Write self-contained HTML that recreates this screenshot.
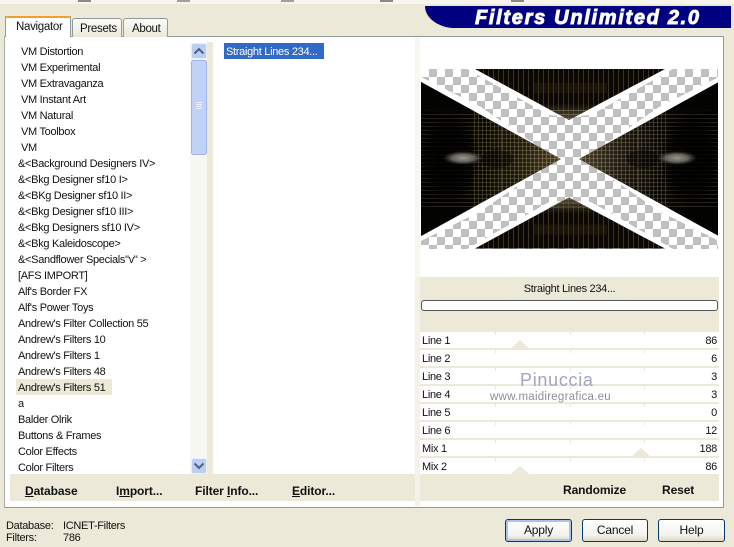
<!DOCTYPE html>
<html><head><meta charset="utf-8"><style>
html,body{margin:0;padding:0}
body{width:734px;height:547px;position:relative;overflow:hidden;background:#ece9d8;font-family:"Liberation Sans",sans-serif;font-size:11px;letter-spacing:-.3px;color:#111}
.a{position:absolute}
.t{position:absolute;white-space:nowrap;line-height:16px;height:16px;margin-top:1px}
.b{font-weight:bold;font-size:12px;letter-spacing:-.1px;margin-top:0}
.row{position:absolute;left:420px;width:299px;height:16px;background:#fff}
.row .l{position:absolute;left:2px;top:1px;line-height:16px}
.row .v{position:absolute;right:2px;top:1px;line-height:16px}
.row i{position:absolute;top:0;width:1px;height:3px;background:#e8e6da}
.btn{position:absolute;top:519px;height:21px;line-height:21px;text-align:center;border:1px solid #003c74;border-radius:3px;background:linear-gradient(#fff,#f4f3ee 70%,#dcd8c8);font-size:12px;letter-spacing:-.2px}
</style></head><body>
<div class="a" style="left:0;top:0;width:734px;height:4px;background:#f6f5ee"></div>
<div class="a" style="left:78px;top:0;width:13px;height:2px;background:#8a8a80"></div>
<div class="a" style="left:177px;top:0;width:13px;height:2px;background:#a0a098"></div>
<div class="a" style="left:281px;top:0;width:13px;height:2px;background:#a0a098"></div>
<div class="a" style="left:380px;top:0;width:13px;height:2px;background:#8a8a80"></div>
<div class="a" style="left:511px;top:0;width:13px;height:2px;background:#8a8a80"></div>

<!-- logo -->
<div class="a" style="left:425px;top:6px;width:306px;height:22px;background:#000080;border-bottom-left-radius:30px 22px"></div>
<div class="t" style="left:475px;top:7px;color:#fff;font:italic bold 20px/20px 'Liberation Sans',sans-serif;letter-spacing:1.7px;-webkit-text-stroke:.9px #fff;height:20px">Filters Unlimited 2.0</div>

<!-- panel -->
<div class="a" style="left:4px;top:36px;width:718px;height:470px;background:#fff;border:1px solid #919b9c;border-left-color:#a5aeae"></div>

<!-- tabs -->
<div class="a" style="left:72px;top:18px;width:48px;height:18px;background:linear-gradient(#fbfbf8,#ece9d8);border:1px solid #919b9c;border-bottom:0;border-radius:3px 3px 0 0"></div>
<div class="a" style="left:123px;top:18px;width:43px;height:18px;background:linear-gradient(#fbfbf8,#ece9d8);border:1px solid #919b9c;border-bottom:0;border-radius:3px 3px 0 0"></div>
<div class="a" style="left:5px;top:16px;width:66px;height:21px;background:#fff;border-left:1px solid #919b9c;border-right:1px solid #919b9c;box-sizing:border-box"></div>
<div class="a" style="left:5px;top:16px;width:66px;height:2px;background:#f0a030;border-radius:3px 3px 0 0"></div>
<div class="t" style="left:16px;top:18px;font-size:11.5px">Navigator</div>
<div class="t" style="left:80px;top:20px;font-size:11.5px">Presets</div>
<div class="t" style="left:132px;top:20px;font-size:11.5px">About</div>

<!-- list -->
<div class="a" style="left:16px;top:379px;width:96px;height:16px;background:#ece9d8"></div>
<div class="t" style="left:21px;top:43px">VM Distortion</div>
<div class="t" style="left:21px;top:59px">VM Experimental</div>
<div class="t" style="left:21px;top:75px">VM Extravaganza</div>
<div class="t" style="left:21px;top:91px">VM Instant Art</div>
<div class="t" style="left:21px;top:107px">VM Natural</div>
<div class="t" style="left:21px;top:123px">VM Toolbox</div>
<div class="t" style="left:21px;top:139px">VM</div>
<div class="t" style="left:18px;top:155px">&amp;&lt;Background Designers IV&gt;</div>
<div class="t" style="left:18px;top:171px">&amp;&lt;Bkg Designer sf10 I&gt;</div>
<div class="t" style="left:18px;top:187px">&amp;&lt;BKg Designer sf10 II&gt;</div>
<div class="t" style="left:18px;top:203px">&amp;&lt;Bkg Designer sf10 III&gt;</div>
<div class="t" style="left:18px;top:219px">&amp;&lt;Bkg Designers sf10 IV&gt;</div>
<div class="t" style="left:18px;top:235px">&amp;&lt;Bkg Kaleidoscope&gt;</div>
<div class="t" style="left:18px;top:251px">&amp;&lt;Sandflower Specials"v" &gt;</div>
<div class="t" style="left:18px;top:267px">[AFS IMPORT]</div>
<div class="t" style="left:18px;top:283px">Alf's Border FX</div>
<div class="t" style="left:18px;top:299px">Alf's Power Toys</div>
<div class="t" style="left:18px;top:315px">Andrew's Filter Collection 55</div>
<div class="t" style="left:18px;top:331px">Andrew's Filters 10</div>
<div class="t" style="left:18px;top:347px">Andrew's Filters 1</div>
<div class="t" style="left:18px;top:363px">Andrew's Filters 48</div>
<div class="t" style="left:18px;top:379px">Andrew's Filters 51</div>
<div class="t" style="left:18px;top:395px">a</div>
<div class="t" style="left:18px;top:411px">Balder Olrik</div>
<div class="t" style="left:18px;top:427px">Buttons &amp; Frames</div>
<div class="t" style="left:18px;top:443px">Color Effects</div>
<div class="t" style="left:18px;top:459px">Color Filters</div>

<!-- scrollbar -->
<div class="a" style="left:190px;top:42px;width:17px;height:432px;background:#f8f8f3"></div>
<div class="a" style="left:207px;top:42px;width:6px;height:432px;background:#ece9d8"></div>
<svg class="a" style="left:191px;top:43px" width="16" height="431" viewBox="0 0 16 431">
<rect x=".5" y=".5" width="15" height="15" rx="2" fill="#bccdf6" stroke="#e8eefc"/>
<path d="M3.5 10.5l4.5-4.5 4.5 4.5" fill="none" stroke="#4d6185" stroke-width="2"/>
<rect x=".5" y="17.5" width="15" height="94" rx="2" fill="#c0d2f8" stroke="#9db4ea"/>
<path d="M5 59.5h6M5 61.5h6M5 63.5h6M5 65.5h6" stroke="#eef2ff" stroke-width="1"/>
<rect x=".5" y="415.5" width="15" height="15" rx="2" fill="#bccdf6" stroke="#e8eefc"/>
<path d="M3.5 420.5l4.5 4.5 4.5-4.5" fill="none" stroke="#4d6185" stroke-width="2"/>
</svg>

<!-- middle -->
<div class="a" style="left:224px;top:43px;width:100px;height:16px;background:#316ac5"></div>
<div class="t" style="left:226px;top:43px;color:#fff">Straight Lines 234...</div>
<div class="a" style="left:415px;top:37px;width:5px;height:240px;background:#f8f8f3"></div>
<div class="a" style="left:415px;top:277px;width:5px;height:229px;background:#f4f2e8"></div>

<!-- preview -->
<svg class="a" style="left:421px;top:69px" width="297" height="180" viewBox="0 0 297 180">
<defs>
<pattern id="ck" width="16" height="16" patternUnits="userSpaceOnUse"><rect width="16" height="16" fill="#fff"/><rect x="8" width="8" height="8" fill="#c0c0c0"/><rect y="8" width="8" height="8" fill="#c0c0c0"/></pattern>
<pattern id="vl" width="5" height="4" patternUnits="userSpaceOnUse"><rect x="2" width="1" height="4" fill="#7a6c48" opacity=".45"/></pattern>
<pattern id="hl" width="4" height="4" patternUnits="userSpaceOnUse"><rect y="1" width="4" height="1" fill="#9a9078" opacity=".5"/></pattern>
<pattern id="gl" width="4" height="4" patternUnits="userSpaceOnUse"><rect x="1" width="1" height="4" fill="#a8986c" opacity=".55"/></pattern>
<linearGradient id="br" x1="0" x2="140" y1="0" y2="0" gradientUnits="userSpaceOnUse"><stop offset="0" stop-color="#040302"/><stop offset=".4" stop-color="#0c0a05"/><stop offset=".65" stop-color="#241d10"/><stop offset="1" stop-color="#4a3f28"/></linearGradient>
<linearGradient id="ov" x1="0" x2="140" y1="0" y2="0" gradientUnits="userSpaceOnUse"><stop offset="0" stop-color="#000" stop-opacity=".55"/><stop offset=".6" stop-color="#000" stop-opacity=".35"/><stop offset="1" stop-color="#000" stop-opacity="0"/></linearGradient>
<radialGradient id="fd"><stop offset="0" stop-color="#000" stop-opacity=".85"/><stop offset=".7" stop-color="#000" stop-opacity=".7"/><stop offset="1" stop-color="#000" stop-opacity="0"/></radialGradient>
<radialGradient id="spot"><stop offset="0" stop-color="#9a988e"/><stop offset=".55" stop-color="#7c7a70" stop-opacity=".8"/><stop offset="1" stop-color="#555" stop-opacity="0"/></radialGradient>
<linearGradient id="ap" x1="0" y1="0" x2="0" y2="1"><stop offset="0" stop-color="#5c4e32" stop-opacity="0"/><stop offset="1" stop-color="#5c4e32"/></linearGradient>
<clipPath id="tp"><polygon points="54,0 244,0 148,51"/></clipPath>
<clipPath id="lp"><polygon points="0,13 140,90 0,167"/></clipPath>
<g id="L"><g clip-path="url(#lp)">
<rect width="140" height="180" fill="url(#br)"/>
<rect x="0" y="40" width="140" height="100" fill="url(#hl)"/>
<rect x="52" y="20" width="88" height="140" fill="url(#gl)"/>
<rect x="80" y="20" width="1" height="140" fill="#a8986c" opacity=".5"/>
<rect width="140" height="180" fill="url(#ov)"/>
<ellipse cx="28" cy="90" rx="30" ry="48" fill="url(#fd)"/>
<ellipse cx="76" cy="90" rx="16" ry="9" fill="#000" opacity=".35"/>
<ellipse cx="42" cy="89" rx="20" ry="7" fill="url(#spot)"/>
<rect x="0" y="0" width="66" height="42" fill="#040302" opacity=".85"/>
<rect x="0" y="140" width="66" height="40" fill="#040302" opacity=".85"/>
</g></g>
<g id="T"><g clip-path="url(#tp)">
<rect width="297" height="55" fill="#0a0704"/>
<rect width="297" height="55" fill="url(#vl)"/>
<rect x="112" y="14" width="74" height="10" fill="#3a2c14" opacity=".35"/>
<rect x="100" y="34" width="100" height="18" fill="url(#ap)"/>
<rect x="110" y="38" width="80" height="14" fill="url(#hl)"/>
</g></g>
</defs>
<rect width="297" height="180" fill="url(#ck)"/>
<g fill="#fff">
<polygon points="0,13 120,79.5 60,38 0,8"/><polygon points="0,167 120,100.5 60,142 0,172"/>
<polygon points="298,13 178,79.5 238,38 298,8"/><polygon points="298,167 178,100.5 238,142 298,172"/>
<polygon points="54,0 140,47 128,46 46,0"/><polygon points="244,0 156,47 170,46 252,0"/>
<polygon points="54,180 140,132 128,133 46,180"/><polygon points="244,180 156,132 170,133 252,180"/>
</g>
<use href="#L"/>
<use href="#L" transform="translate(298,0) scale(-1,1)"/>
<use href="#T"/>
<use href="#T" transform="translate(0,179.5) scale(1,-1)"/>
</svg>

<!-- caption -->
<div class="a" style="left:420px;top:277px;width:299px;height:55px;background:#ece9d8"></div>
<div class="t" style="left:420px;width:299px;text-align:center;top:280px">Straight Lines 234...</div>
<div class="a" style="left:421px;top:300px;width:295px;height:9px;background:#fff;border:1px solid #555;border-radius:3px"></div>

<!-- rows -->
<div class="a" style="left:420px;top:332px;width:299px;height:169px;background:#ece9d8"></div>
<div class="row" style="top:332px"><i style="left:75px"></i><i style="left:150px"></i><i style="left:224px"></i><span class="l">Line 1</span><span class="v">86</span></div>
<div class="row" style="top:350px"><i style="left:75px"></i><i style="left:150px"></i><i style="left:224px"></i><span class="l">Line 2</span><span class="v">6</span></div>
<div class="row" style="top:368px"><i style="left:75px"></i><i style="left:150px"></i><i style="left:224px"></i><span class="l">Line 3</span><span class="v">3</span></div>
<div class="row" style="top:386px"><i style="left:75px"></i><i style="left:150px"></i><i style="left:224px"></i><span class="l">Line 4</span><span class="v">3</span></div>
<div class="row" style="top:404px"><i style="left:75px"></i><i style="left:150px"></i><i style="left:224px"></i><span class="l">Line 5</span><span class="v">0</span></div>
<div class="row" style="top:422px"><i style="left:75px"></i><i style="left:150px"></i><i style="left:224px"></i><span class="l">Line 6</span><span class="v">12</span></div>
<div class="row" style="top:440px"><i style="left:75px"></i><i style="left:150px"></i><i style="left:224px"></i><span class="l">Mix 1</span><span class="v">188</span></div>
<div class="row" style="top:458px"><i style="left:75px"></i><i style="left:150px"></i><i style="left:224px"></i><span class="l">Mix 2</span><span class="v">86</span></div>
<svg class="a" style="left:420px;top:332px" width="299" height="145"><g fill="#ece9d8"><path d="M91 16l9-8 9 8z"/><path d="M212 124l9-8 9 8z"/><path d="M91 142l9-8 9 8z"/></g></svg>

<!-- watermark -->
<div class="t" style="left:520px;top:369px;height:20px;line-height:20px;font-size:18px;letter-spacing:.7px;color:#a2a4c4">Pinuccia</div>
<div class="t" style="left:490px;top:388px;font-size:11.5px;letter-spacing:.25px;color:#8e8e9e">www.maidiregrafica.eu</div>

<!-- left bar -->
<div class="a" style="left:10px;top:474px;width:405px;height:27px;background:#ece9d8"></div>
<div class="t b" style="left:25px;top:483px"><u>D</u>atabase</div>
<div class="t b" style="left:116px;top:483px">I<u>m</u>port...</div>
<div class="t b" style="left:195px;top:483px">Filter <u>I</u>nfo...</div>
<div class="t b" style="left:292px;top:483px"><u>E</u>ditor...</div>
<div class="t b" style="left:563px;top:482px">Randomize</div>
<div class="t b" style="left:662px;top:482px">Reset</div>

<!-- bottom -->
<div class="t" style="left:6px;top:517px">Database:</div>
<div class="t" style="left:63px;top:517px">ICNET-Filters</div>
<div class="t" style="left:6px;top:529px">Filters:</div>
<div class="t" style="left:63px;top:529px">786</div>
<div class="btn" style="left:505px;width:65px;box-shadow:inset 0 0 0 2px #a8c4ec">Apply</div>
<div class="btn" style="left:582px;width:64px">Cancel</div>
<div class="btn" style="left:658px;width:65px">Help</div>
</body></html>
